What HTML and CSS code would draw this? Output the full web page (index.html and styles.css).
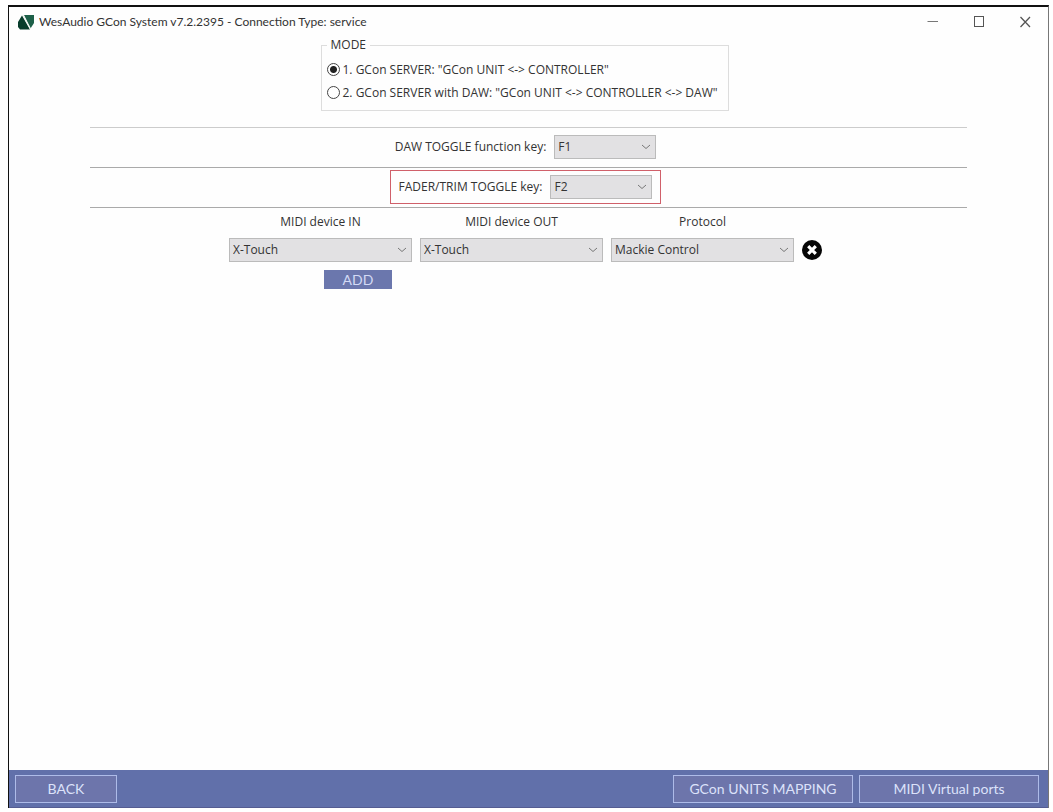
FILE: index.html
```html
<!DOCTYPE html>
<html lang="en">
<head>
<meta charset="utf-8">
<title>WesAudio GCon System</title>
<link rel="stylesheet" href="styles.css">
</head>
<body>
<div class="window">
  <header class="titlebar">
    <svg class="logo" width="16" height="15" viewBox="0 0 16 15" aria-hidden="true">
      <path d="M6 0H16V8L12.5 13.5Z" fill="#1d6049"/>
      <path d="M0 7L4 0.5L12 14.5H2L0 12Z" fill="#083d2c"/>
      <path d="M5 0L12.5 14" stroke="#eef5f1" stroke-width="1.3"/>
    </svg>
    <h1 class="title">WesAudio GCon System v7.2.2395 - Connection Type: service</h1>
    <div class="controls">
      <button class="control" type="button" aria-label="Minimize"><svg width="12" height="12" viewBox="0 0 12 12"><path d="M0.5 5.5H11" stroke="#777"/></svg></button>
      <button class="control" type="button" aria-label="Maximize"><svg width="12" height="12" viewBox="0 0 12 12"><rect x="1.5" y="0.5" width="9" height="10" fill="none" stroke="#555"/></svg></button>
      <button class="control" type="button" aria-label="Close"><svg width="12" height="12" viewBox="0 0 12 12"><path d="M1.5 1L11 11M11 1L1.5 11" stroke="#555" stroke-width="1.3"/></svg></button>
    </div>
  </header>

  <main class="content">
    <fieldset class="mode">
      <legend>MODE</legend>
      <label class="option"><input type="radio" name="mode" checked>1. GCon SERVER: "GCon UNIT &lt;-&gt; CONTROLLER"</label>
      <label class="option"><input type="radio" name="mode">2. GCon SERVER with DAW: "GCon UNIT &lt;-&gt; CONTROLLER &lt;-&gt; DAW"</label>
    </fieldset>

    <section class="band band-soft">
      <div class="key">
        <label for="daw-key">DAW TOGGLE function key:</label>
        <select id="daw-key" class="select"><option>F1</option></select>
      </div>
    </section>
    <section class="band">
      <div class="key key-marked">
        <label for="fader-key">FADER/TRIM TOGGLE key:</label>
        <select id="fader-key" class="select"><option>F2</option></select>
      </div>
    </section>
    <section class="band">
      <div class="devices">
        <label class="heading" for="midi-in">MIDI device IN</label>
        <label class="heading" for="midi-out">MIDI device OUT</label>
        <label class="heading" for="protocol">Protocol</label>
        <span></span>
        <select id="midi-in" class="select"><option>X-Touch</option></select>
        <select id="midi-out" class="select"><option>X-Touch</option></select>
        <select id="protocol" class="select"><option>Mackie Control</option></select>
        <button class="remove" type="button" aria-label="Remove">
          <svg width="20" height="20" viewBox="0 0 20 20"><circle cx="10" cy="10" r="10" fill="#050505"/><path d="M6.2 6.2L13.8 13.8M13.8 6.2L6.2 13.8" stroke="#fff" stroke-width="3.2"/></svg>
        </button>
        <button class="add" type="button">ADD</button>
      </div>
    </section>
  </main>

  <footer class="footer">
    <button class="nav nav-back" type="button">BACK</button>
    <button class="nav nav-wide" type="button">GCon UNITS MAPPING</button>
    <button class="nav nav-wide" type="button">MIDI Virtual ports</button>
  </footer>
</div>
</body>
</html>
```
FILE: styles.css
```css
* {
  box-sizing: border-box;
}

body {
  margin: 0;
  height: 100vh;
  padding: 5px 4px 4px 8px;
  background: #fff;
  color: #333;
  font: 12px/16px "Open Sans", "Noto Sans", sans-serif;
}

button,
select {
  font: inherit;
  color: inherit;
}

.window {
  display: flex;
  flex-direction: column;
  height: 100%;
  background: #fefefe;
  border: 1px solid #777;
  border-top: 2px solid #111;
  border-left-color: #111;
  border-bottom: 0;
}

.titlebar {
  display: flex;
  align-items: center;
  height: 30px;
  padding-left: 9px;
}

.logo {
  flex: none;
  margin-right: 5px;
}

.title {
  flex: 1;
  margin: 0;
  font: 400 12px/16px Lato, "Open Sans", sans-serif;
}

.controls {
  display: flex;
}

.control {
  display: grid;
  place-items: center;
  width: 46px;
  height: 30px;
  padding: 0;
  border: 0;
  background: none;
}

.content {
  flex: 1;
  display: flex;
  flex-direction: column;
  padding: 0 81px;
}

.mode {
  align-self: center;
  width: 408px;
  margin: 0 8px 16px 0;
  padding: 5px 5px 6px;
  border: 1px solid #ddd;
}

.mode legend {
  padding: 0 4px;
}

.option {
  display: flex;
  align-items: center;
  gap: 3px;
  height: 23px;
  white-space: nowrap;
}

.option input {
  appearance: none;
  width: 13px;
  height: 13px;
  margin: 0;
  border: 1px solid #444;
  border-radius: 50%;
}

.option input:checked {
  background: radial-gradient(circle, #222 0 3px, #fff 4px);
}

.band {
  display: flex;
  justify-content: center;
  padding: 2px 6px 3px 0;
  border-top: 1px solid #aaa;
}

.band-soft {
  border-color: #ccc;
}

.key {
  display: flex;
  align-items: center;
  gap: 8px;
  height: 34px;
  padding: 0 8px;
  border: 1px solid transparent;
}

.key-marked {
  border-color: #d0606a;
}

.select {
  appearance: none;
  width: 102px;
  height: 24px;
  padding: 0 20px 0 3px;
  border: 1px solid #bbb;
  border-radius: 0;
  background: #e2e1e3 url("data:image/svg+xml,%3Csvg xmlns='http://www.w3.org/2000/svg' width='10' height='6'%3E%3Cpath d='M1 1L5 4.5L9 1' fill='none' stroke='%23777'/%3E%3C/svg%3E") no-repeat right 4px center;
}

.devices {
  display: grid;
  grid-template-columns: repeat(3, 183px) 20px;
  column-gap: 8px;
  row-gap: 8px;
  align-items: center;
  padding-top: 4px;
}

.devices .select {
  width: 100%;
}

.heading {
  text-align: center;
}

.remove {
  display: grid;
  padding: 0;
  border: 0;
  background: none;
}

.add {
  justify-self: end;
  width: 68px;
  height: 19px;
  margin-right: 20px;
  padding: 0;
  border: 0;
  background: #6b77ad;
  color: #d3daf5;
  font: 14px/16px Lato, sans-serif;
}

.footer {
  display: flex;
  gap: 6px;
  height: 38px;
  padding: 5px 9px 4px 6px;
  background: #6170aa;
  border-bottom: 1px solid #555c91;
}

.nav {
  padding: 0;
  border: 1px solid #aebbe8;
  background: #6d75ab;
  color: #dce2fa;
  font: 14px/18px Lato, sans-serif;
}

.nav-back {
  width: 102px;
  margin-right: auto;
}

.nav-wide {
  width: 180px;
}
```
